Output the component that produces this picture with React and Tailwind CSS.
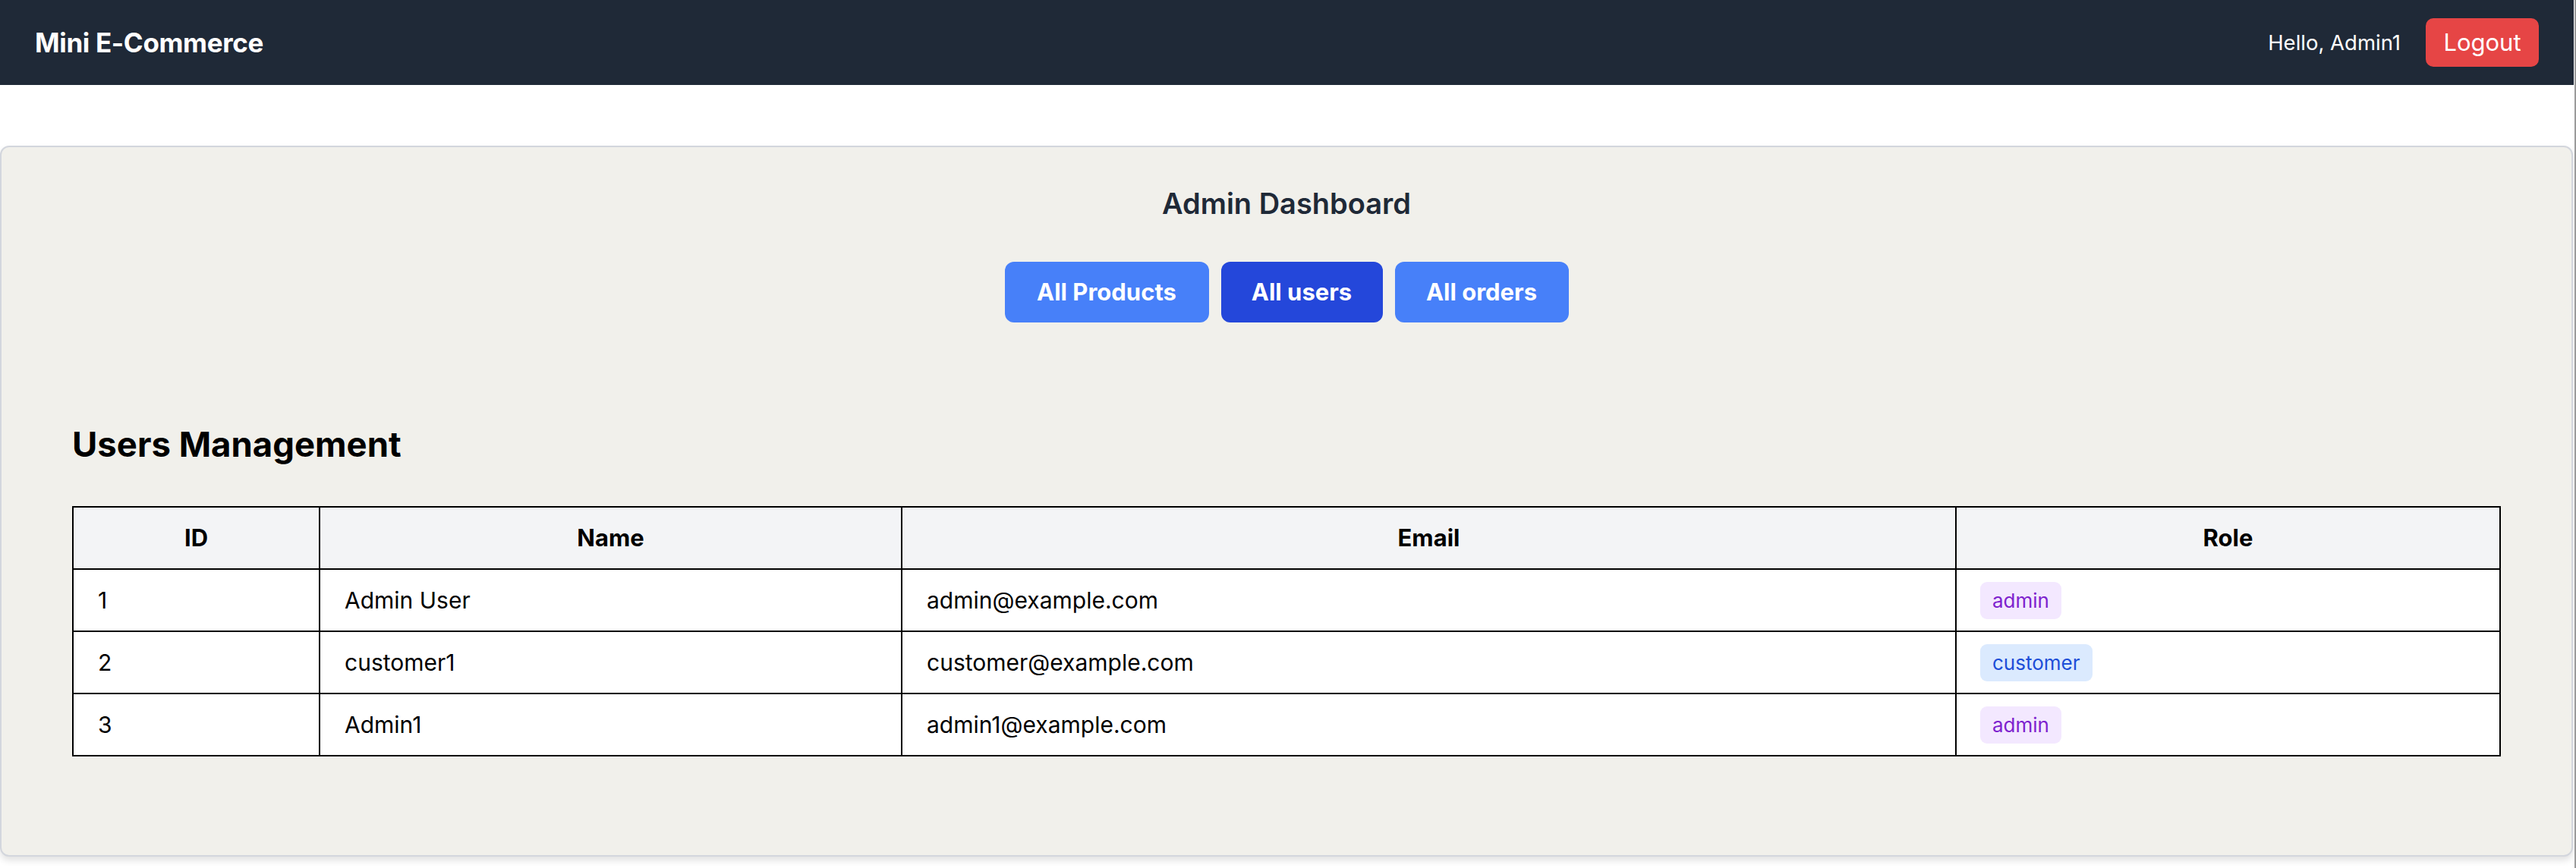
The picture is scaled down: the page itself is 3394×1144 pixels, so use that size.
import React from "react";

const users = [
  { id: 1, name: "Admin User", email: "admin@example.com", role: "admin" },
  { id: 2, name: "customer1", email: "customer@example.com", role: "customer" },
  { id: 3, name: "Admin1", email: "admin1@example.com", role: "admin" },
];

export default function App() {
  return (
    <div className="flex min-h-screen bg-white font-['Inter','Noto_Sans',sans-serif]">
      <div className="flex-1 flex flex-col">
        <nav className="h-[112px] bg-[#1f2937] flex items-center justify-between pl-[46px] pr-[46px] mr-px">
          <div className="text-white font-bold text-[35px] leading-[47px] tracking-[-0.01em]">Mini E-Commerce</div>
          <div className="flex items-center gap-[33px]">
            <span className="text-white text-[27.5px] leading-[40px]">Hello, Admin1</span>
            <button className="h-[64px] w-[149px] rounded-[10px] bg-[#e64545] text-white text-[31px] leading-[40px]">
              Logout
            </button>
          </div>
        </nav>

        <div className="mt-[80px] mr-[2px] rounded-[12px] border-2 border-[#d3d6dd] bg-[#f1f0eb] shadow-[0_5px_10px_rgba(0,0,0,0.12)] pt-[45px] pb-[130px] px-[93px]">
          <h1 className="text-center text-[#1f2937] font-semibold text-[38px] leading-[58px]">Admin Dashboard</h1>
          <div className="mt-[48px] flex justify-center gap-[16px]">
            <button className="h-[80px] w-[269px] rounded-[12px] bg-[#4780f9] text-white font-bold text-[31px]">All Products</button>
            <button className="h-[80px] w-[213px] rounded-[12px] bg-[#2447da] text-white font-bold text-[31px]">All users</button>
            <button className="h-[80px] w-[229px] rounded-[12px] bg-[#4780f9] text-white font-bold text-[31px]">All orders</button>
          </div>

          <h2 className="mt-[129px] text-black font-bold text-[45.5px] leading-[64px]">Users Management</h2>

          <table className="mt-[49px] w-full table-fixed border-collapse border-2 border-black text-black">
            <thead>
              <tr className="bg-[#f3f4f6] h-[82px]">
                <th className="w-[325px] border-2 border-black font-bold text-[31px] text-center">ID</th>
                <th className="w-[767px] border-2 border-black font-bold text-[31px] text-center">Name</th>
                <th className="w-[1389px] border-2 border-black font-bold text-[31px] text-center">Email</th>
                <th className="border-2 border-black font-bold text-[31px] text-center">Role</th>
              </tr>
            </thead>
            <tbody>
              {users.map((u) => (
                <tr key={u.id} className="bg-white h-[82px]">
                  <td className="border-2 border-black pl-[32px] text-[30px]">{u.id}</td>
                  <td className="border-2 border-black pl-[32px] text-[30px]">{u.name}</td>
                  <td className="border-2 border-black pl-[32px] text-[30px]">{u.email}</td>
                  <td className="border-2 border-black pl-[31px]">
                    {u.role === "admin" ? (
                      <span className="inline-block rounded-[9px] bg-[#f3e8ff] text-[#7e22ce] text-[26px] leading-[35px] px-[16px] py-[7px]">
                        admin
                      </span>
                    ) : (
                      <span className="inline-block rounded-[9px] bg-[#dbeafe] text-[#1d4ed8] text-[26px] leading-[35px] px-[16px] py-[7px]">
                        customer
                      </span>
                    )}
                  </td>
                </tr>
              ))}
            </tbody>
          </table>
        </div>
      </div>
      <div className="w-[2px] bg-[#9b9b9b]" />
    </div>
  );
}
